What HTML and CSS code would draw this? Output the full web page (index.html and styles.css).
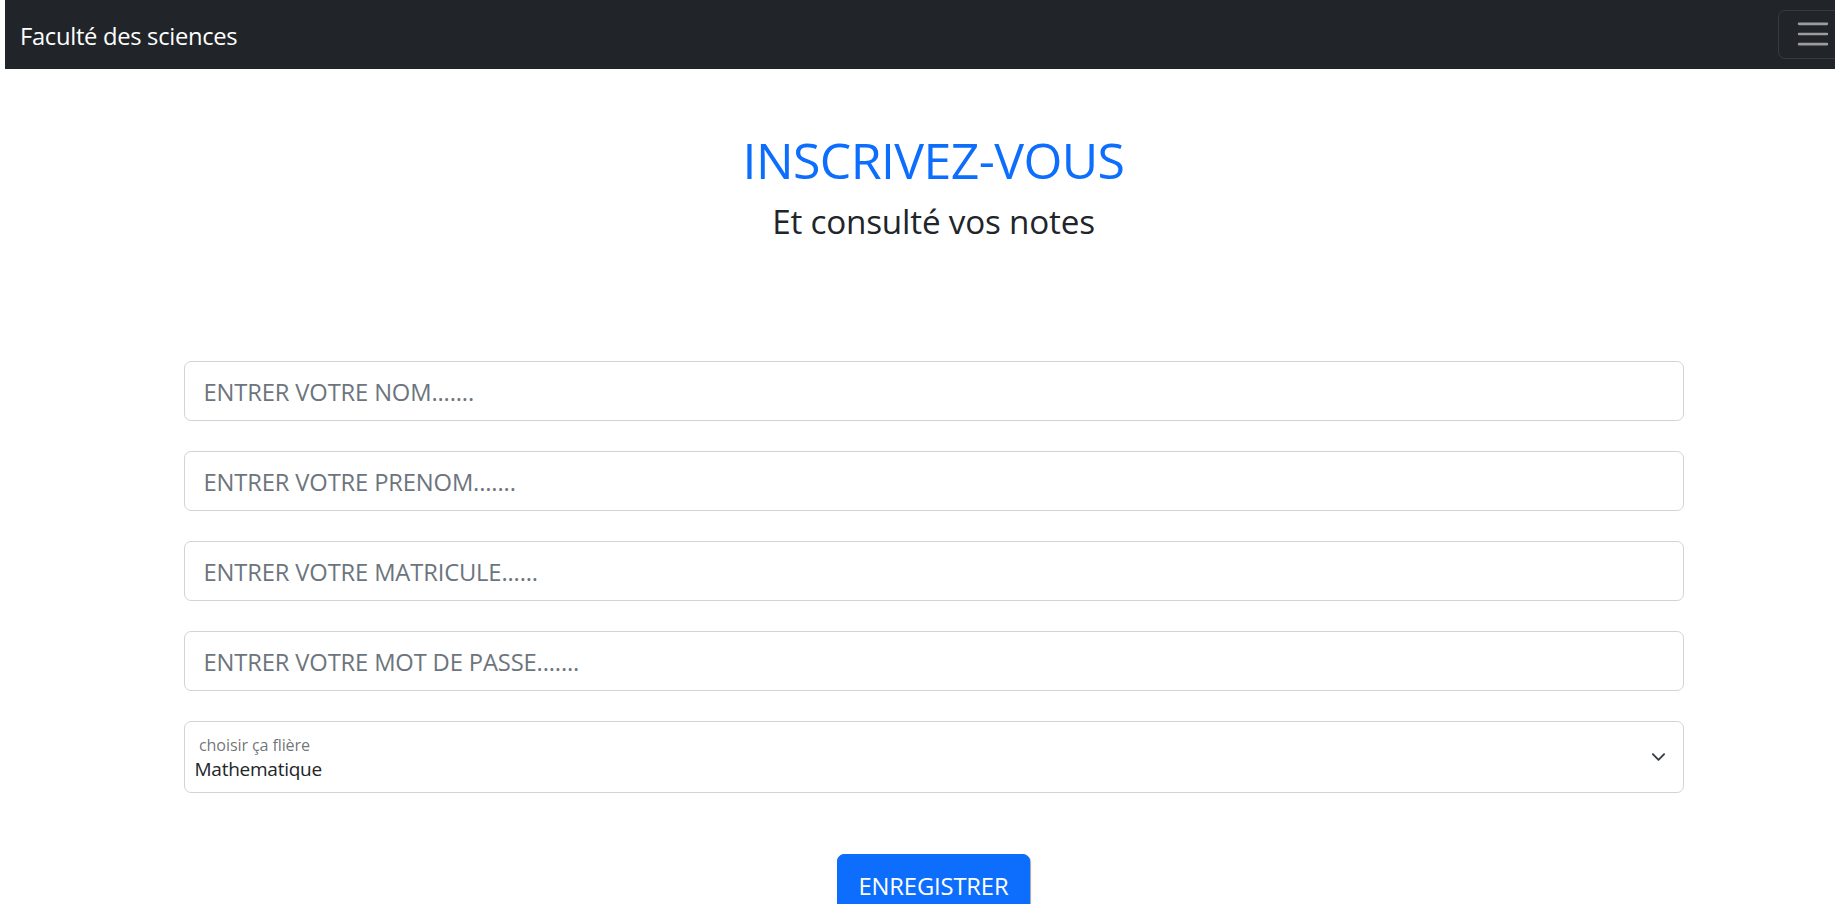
FILE: index.html
```html
<!DOCTYPE html>
<html lang="fr">
<head>
<meta charset="utf-8">
<title>Inscription</title>
<link rel="stylesheet" href="styles.css">
</head>
<body>
<div class="page">
  <nav class="navbar">
    <a class="brand" href="#">Faculté des sciences</a>
    <button class="toggler" type="button" aria-label="Menu">
      <svg class="toggler-icon" viewBox="0 0 30 30" width="38" height="38">
        <path d="M4 7h22M4 15h22M4 23h22" stroke="rgba(255,255,255,0.55)" stroke-width="2" stroke-linecap="round" fill="none"/>
      </svg>
    </button>
  </nav>

  <main class="main">
    <header class="hero">
      <h1 class="hero-title">INSCRIVEZ-VOUS</h1>
      <h3 class="hero-sub">Et consulté vos notes</h3>
    </header>

    <form class="form">
      <input class="field" type="text" placeholder="ENTRER VOTRE NOM.......">
      <input class="field" type="text" placeholder="ENTRER VOTRE PRENOM.......">
      <input class="field" type="text" placeholder="ENTRER VOTRE MATRICULE......">
      <input class="field" type="password" placeholder="ENTRER VOTRE MOT DE PASSE.......">
      <div class="floating">
        <select class="select" id="filiere">
          <option>Mathematique</option>
          <option>Physique</option>
          <option>Informatique</option>
        </select>
        <label class="floating-label" for="filiere">choisir ça flière</label>
        <svg class="chevron" viewBox="0 0 16 16" width="15" height="15">
          <path d="m2 5 6 6 6-6" fill="none" stroke="#343a40" stroke-width="2" stroke-linecap="round" stroke-linejoin="round"/>
        </svg>
      </div>
      <div class="actions">
        <button class="btn" type="submit">ENREGISTRER</button>
      </div>
    </form>
  </main>
</div>
</body>
</html>
```
FILE: styles.css
```css
html, body {
  margin: 0;
  padding: 0;
  overflow: hidden;
  background: #fff;
}

body {
  font-family: "Open Sans", "Noto Sans", sans-serif;
  color: #212529;
}

.page {
  width: 1867px;
}

/* Navbar */
.navbar {
  margin-left: 5px;
  height: 69px;
  box-sizing: border-box;
  background: #212529;
  display: flex;
  align-items: center;
  justify-content: space-between;
  padding: 0 19px 0 15px;
}

.brand {
  color: #fff;
  text-decoration: none;
  font-size: 23.75px;
  letter-spacing: -0.3px;
  line-height: 32px;
  padding-top: 3px;
}

.toggler {
  width: 70px;
  height: 49px;
  padding: 0;
  margin-top: -1px;
  background: transparent;
  border: 1px solid rgba(255, 255, 255, 0.1);
  border-radius: 7px;
  display: flex;
  align-items: center;
  justify-content: center;
}

.toggler-icon {
  display: block;
}

/* Hero */
.hero {
  text-align: center;
  padding-top: 61px;
}

.hero-title {
  margin: 0;
  font-size: 50px;
  font-weight: 400;
  line-height: 60px;
  letter-spacing: -0.6px;
  color: #0d6efd;
}

.hero-sub {
  margin: 11px 0 0;
  font-size: 33.25px;
  font-weight: 400;
  line-height: 40px;
  letter-spacing: -0.2px;
  color: #212529;
}

/* Form */
.form {
  width: 1500px;
  margin: 120px auto 0;
  display: flex;
  flex-direction: column;
}

.field {
  display: block;
  height: 60px;
  box-sizing: border-box;
  margin: 0 0 30px;
  padding: 2px 19px 0;
  border: 1px solid #ced4da;
  border-radius: 7px;
  font-family: inherit;
  font-size: 23.75px;
  letter-spacing: -0.15px;
  color: #212529;
  background: #fff;
  outline: none;
}

.field::placeholder {
  color: #6c757d;
  opacity: 1;
}

.floating {
  position: relative;
  margin-bottom: 61px;
}

.select {
  display: block;
  width: 100%;
  height: 72px;
  box-sizing: border-box;
  padding: 33px 40px 9px 10px;
  border: 1px solid #ced4da;
  border-radius: 7px;
  background: #fff;
  font-family: inherit;
  font-size: 19px;
  line-height: 28px;
  letter-spacing: -0.25px;
  color: #212529;
  appearance: none;
  -webkit-appearance: none;
  outline: none;
}

.floating-label {
  position: absolute;
  left: 15.5px;
  top: 12.4px;
  font-size: 16.15px;
  line-height: 24px;
  letter-spacing: -0.13px;
  color: rgba(33, 37, 41, 0.65);
  pointer-events: none;
}

.chevron {
  position: absolute;
  right: 18px;
  top: 50%;
  transform: translateY(-50%);
  pointer-events: none;
}

.actions {
  display: flex;
  justify-content: center;
}

.btn {
  padding: 13px 21px 9px;
  border: 1px solid #0d6efd;
  border-radius: 7px;
  background: #0d6efd;
  color: #fff;
  font-family: inherit;
  font-size: 23.75px;
  line-height: 36px;
  letter-spacing: -0.14px;
  box-shadow: 1px 1px 1px rgba(0, 0, 0, 0.35);
  cursor: pointer;
}
```
